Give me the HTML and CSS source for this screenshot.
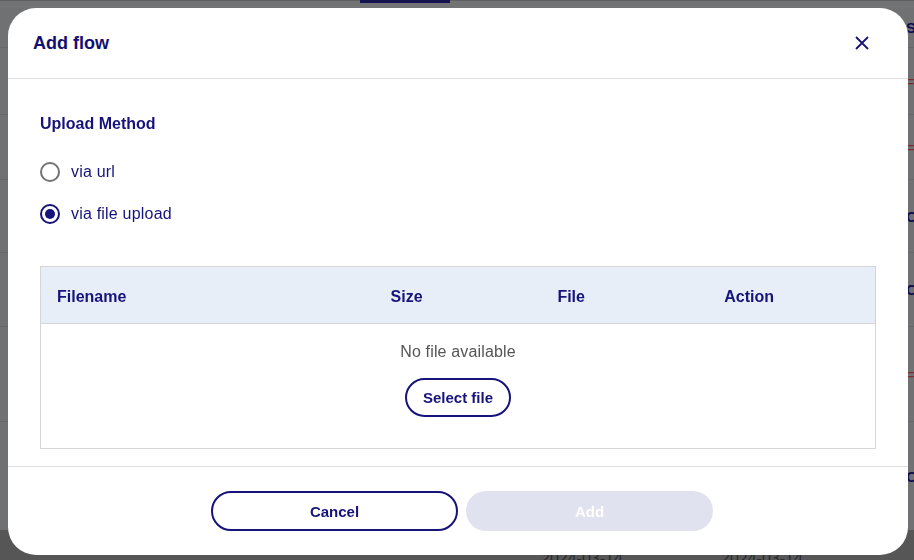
FILE: index.html
```html
<!DOCTYPE html>
<html lang="en">
<head>
<meta charset="utf-8">
<title>Add flow</title>
<link rel="stylesheet" href="styles.css">
</head>
<body>
<div class="page">
  <div class="topbar"><span class="tab"></span></div>
  <div class="rows">
    <div class="row r1"><span class="cell head">S</span></div>
    <div class="row r2"><span class="cell red">=</span></div>
    <div class="row r3"><span class="cell red">=</span></div>
    <div class="row r4"><span class="cell">C</span></div>
    <div class="row r5"><span class="cell">C</span></div>
    <div class="row r6"><span class="cell red">=</span></div>
    <div class="row r7"><span class="cell">C</span></div>
  </div>
  <div class="bottombar"><span class="date d1">2024-03-14</span><span class="date d2">2024-03-14</span></div>
</div>

<div class="modal" role="dialog">
  <div class="modal-header">
    <h2 class="modal-title">Add flow</h2>
    <button class="close" aria-label="Close">
      <svg width="16" height="16" viewBox="0 0 16 16"><path d="M2 2 L14 14 M14 2 L2 14" stroke="#16137a" stroke-width="1.8" fill="none"/></svg>
    </button>
  </div>
  <div class="modal-body">
    <div class="label">Upload Method</div>
    <div class="radios">
      <label class="radio"><span class="dot"></span><span>via url</span></label>
      <label class="radio checked"><span class="dot"></span><span>via file upload</span></label>
    </div>
    <div class="table">
      <div class="thead">
        <div>Filename</div><div>Size</div><div>File</div><div>Action</div>
      </div>
      <div class="tbody">
        <div class="empty">No file available</div>
        <button class="btn-outline small">Select file</button>
      </div>
    </div>
  </div>
  <div class="modal-footer">
    <button class="btn-outline wide">Cancel</button>
    <button class="btn-disabled wide">Add</button>
  </div>
</div>
</body>
</html>
```

FILE: styles.css
```css
* { box-sizing: border-box; }
html, body { margin: 0; padding: 0; }
body {
  width: 914px;
  height: 560px;
  overflow: hidden;
  background: #6f7173;
  font-family: "Liberation Sans", Arial, sans-serif;
  color: #16137a;
}
.page { height: 560px; display: flex; flex-direction: column; }
.topbar { height: 8px; position: relative; background: #717375; border-top: 1px solid #5e6062; }
.tab { position: absolute; left: 360px; top: -1px; width: 90px; height: 3px; background: #14124f; }
.rows { flex: 1; display: flex; flex-direction: column; }
.row { display: flex; justify-content: flex-end; align-items: center; border-bottom: 1px solid #65686a; }
.cell { width: 8px; font-size: 15px; font-weight: bold; color: #0f0d4e; overflow: hidden; white-space: nowrap; }
.cell.red { color: #7c2b2b; font-weight: normal; }
.cell.head { color: #0e0c55; }
.r1 { height: 40px; }
.r2 { height: 67px; }
.r3 { height: 65px; }
.r4 { height: 73px; }
.r5 { height: 74px; }
.r6 { height: 95px; }
.r7 { flex: 1; border-bottom: none; }
.bottombar { height: 30px; background: #565657; position: relative; }
.date { position: absolute; top: 20px; font-size: 16px; color: #2b2b2b; }
.d1 { left: 541px; }
.d2 { left: 721px; }

.modal {
  position: fixed;
  left: 8px;
  top: 8px;
  width: 900px;
  height: 547px;
  background: #fff;
  border-radius: 28px;
  display: flex;
  flex-direction: column;
}
.modal-header {
  height: 71px;
  display: flex;
  align-items: center;
  justify-content: space-between;
  padding: 0 38px 0 25px;
  border-bottom: 1px solid #e2e2e2;
}
.modal-title { margin: 0; font-size: 18px; font-weight: bold; color: #120f70; }
.close { border: 0; background: none; padding: 0; width: 16px; height: 16px; display: flex; cursor: pointer; }

.modal-body { padding: 35px 32px 16px; flex: 1; }
.label { font-size: 16px; font-weight: bold; line-height: 20px; }
.radios { display: flex; flex-direction: column; gap: 22px; margin-top: 28px; }
.radio { display: flex; align-items: center; gap: 11px; font-size: 16px; line-height: 20px; letter-spacing: 0.2px; }
.dot { width: 20px; height: 20px; border-radius: 50%; border: 2px solid #737373; display: flex; align-items: center; justify-content: center; }
.radio.checked .dot { border-color: #16137a; }
.radio.checked .dot::after { content: ""; width: 10px; height: 10px; border-radius: 50%; background: #16137a; }

.table { margin-top: 42px; border: 1px solid #d6d6d6; }
.thead {
  display: grid;
  grid-template-columns: 2fr 1fr 1fr 1fr;
  height: 57px;
  padding-top: 3px;
  align-items: center;
  background: #e7eef7;
  border-bottom: 1px solid #d6d6d6;
  font-size: 16px;
  font-weight: bold;
}
.thead div { padding-left: 16px; }
.tbody { display: flex; flex-direction: column; align-items: center; padding: 18px 0 31px; }
.empty { font-size: 16px; line-height: 20px; color: #555; letter-spacing: 0.15px; }

.btn-outline {
  font-family: inherit;
  font-weight: bold;
  color: #16137a;
  background: #fff;
  border: 2px solid #16137a;
  border-radius: 999px;
  cursor: pointer;
}
.small { margin-top: 16px; height: 39px; padding: 0 16px; font-size: 15px; }
.modal-footer {
  border-top: 1px solid #e2e2e2;
  display: flex;
  justify-content: center;
  gap: 8px;
  padding: 24px 0 24px 8px;
}
.wide { width: 247px; height: 40px; font-size: 15px; }
.btn-disabled {
  font-family: inherit;
  font-weight: bold;
  color: #fff;
  background: #e0e3ef;
  border: 0;
  border-radius: 999px;
}
```
